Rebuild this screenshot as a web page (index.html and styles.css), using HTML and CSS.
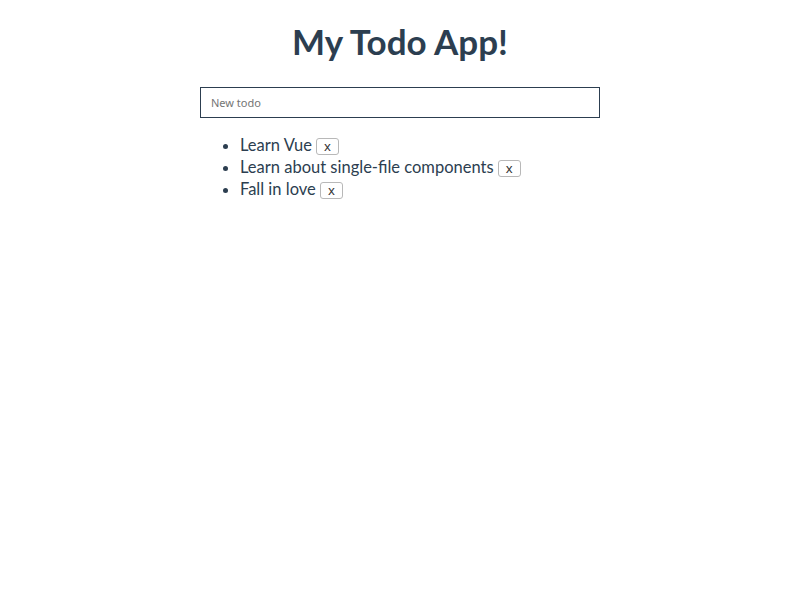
FILE: index.html
```html
<!DOCTYPE html>
<html>
<head>
<meta charset="utf-8">
<link rel="stylesheet" href="styles.css">
</head>
<body>
<div class="app">
  <h1 class="title">My Todo App!</h1>
  <input class="new-todo" type="text" placeholder="New todo">
  <ul class="todo-list">
    <li class="todo-item">Learn Vue <button class="remove">x</button></li>
    <li class="todo-item">Learn about single-file components <button class="remove">x</button></li>
    <li class="todo-item">Fall in love <button class="remove">x</button></li>
  </ul>
</div>
</body>
</html>
```

FILE: styles.css
```css
html, body {
  margin: 0;
  padding: 0;
  background: #fff;
}
.app {
  width: 400px;
  margin: 0 auto;
  font-family: "Lato", "Open Sans", sans-serif;
  color: #2c3e50;
}
.title {
  margin: 0;
  padding-top: 21px;
  font-size: 35px;
  line-height: 40px;
  font-weight: 700;
  text-align: center;
}
.new-todo {
  display: block;
  box-sizing: border-box;
  width: 400px;
  height: 31px;
  margin-top: 26px;
  padding: 0 10px;
  border: 1px solid #2c3e50;
  font-family: "Noto Sans", "DejaVu Sans", sans-serif;
  font-size: 11px;
  color: #2c3e50;
  outline: none;
}
.new-todo::placeholder {
  color: #757575;
}
.todo-list {
  margin: 16px 0 0;
  padding-left: 40px;
  font-size: 16.5px;
  line-height: 22px;
}
.todo-item {
  margin: 0;
}
.remove {
  font-family: "Noto Sans", "DejaVu Sans", sans-serif;
  font-size: 13px;
  line-height: 14px;
  padding: 0 7px;
  height: 17px;
  color: #333;
  background: #fff;
  border: 1px solid #b8b8b8;
  border-radius: 3px;
  vertical-align: 0px;
}
```
